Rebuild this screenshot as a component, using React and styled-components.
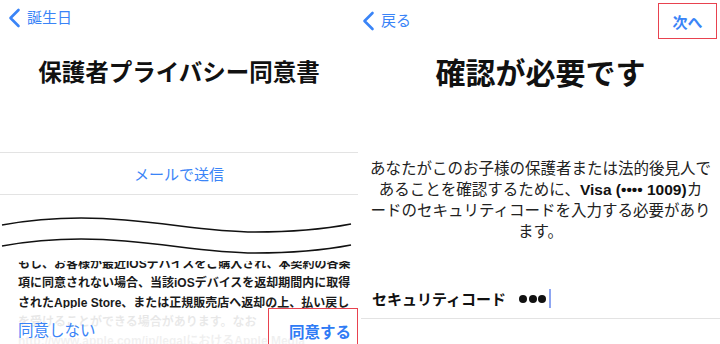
import React from "react";
import styled, { createGlobalStyle } from "styled-components";

const BLUE = "#3a84f7";
const RED = "#e8424f";
const LINE = "#e3e3e3";

const GlobalStyle = createGlobalStyle`
  html, body {
    margin: 0;
    padding: 0;
    background: #fff;
  }
  body {
    font-family: "Liberation Sans", "Noto Sans CJK JP", sans-serif;
    color: #111;
  }
  button {
    font-family: inherit;
  }
`;

const Screen = styled.div`
  display: flex;
  width: 720px;
  height: 344px;
  overflow: hidden;
  background: #fff;
`;

const Pane = styled.section`
  display: flex;
  flex-direction: column;
  width: ${(p) => p.$width}px;
  margin-left: ${(p) => p.$offset || 0}px;
  height: 100%;
`;

const NavBar = styled.div`
  display: flex;
  align-items: center;
  justify-content: space-between;
  height: ${(p) => p.$height}px;
  padding: 0 ${(p) => p.$right}px 0 ${(p) => p.$left}px;
  flex-shrink: 0;
`;

const BackButton = styled.button`
  display: flex;
  align-items: center;
  gap: 6px;
  padding: 0;
  border: none;
  background: none;
  color: ${BLUE};
  font-size: 15px;
  line-height: 20px;
`;

const NextButton = styled.button`
  display: flex;
  align-items: center;
  justify-content: center;
  width: 59px;
  height: 36px;
  padding: 0;
  background: none;
  border: 1.5px solid ${(p) => (p.$highlighted ? RED : "transparent")};
  color: ${BLUE};
  font-size: 15px;
  font-weight: 600;
`;

const Title = styled.h1`
  margin: ${(p) => p.$top}px 0 0;
  text-align: center;
  font-size: ${(p) => p.$size}px;
  line-height: ${(p) => p.$lh}px;
  font-weight: 700;
  color: #111;
  white-space: nowrap;
`;

const MailRow = styled.div`
  margin-top: 64px;
  height: 41px;
  display: flex;
  align-items: center;
  justify-content: center;
  border-top: 1px solid ${LINE};
  border-bottom: 1px solid ${LINE};
  color: ${BLUE};
  font-size: 15px;
  flex-shrink: 0;
`;

const DocArea = styled.div`
  position: relative;
  flex: 1;
  display: flex;
  flex-direction: column;
  overflow: hidden;
`;

const Waves = styled.svg`
  display: block;
  flex-shrink: 0;
`;

const TextClip = styled.div`
  flex: 1;
  overflow: hidden;
`;

const DocText = styled.div`
  margin-top: -6px;
  padding-left: 18px;
  font-size: 12px;
  line-height: 19.3px;
  font-weight: 700;
  color: #1a1a1a;
  white-space: nowrap;
`;

const Toolbar = styled.div`
  position: absolute;
  left: 0;
  right: 0;
  bottom: 0;
  height: 36px;
  display: flex;
  align-items: flex-end;
  justify-content: space-between;
  padding-left: 18px;
  background: linear-gradient(
    rgba(255, 255, 255, 0.88),
    rgba(255, 255, 255, 0.94)
  );
`;

const ToolbarButton = styled.button`
  display: flex;
  align-items: flex-end;
  padding: 0 0 ${(p) => (p.$highlighted ? 0 : 2)}px
    ${(p) => (p.$highlighted ? 20 : 0)}px;
  width: ${(p) => (p.$highlighted ? "90px" : "auto")};
  height: ${(p) => (p.$highlighted ? "37px" : "auto")};
  margin-bottom: ${(p) => (p.$highlighted ? -1 : 0)}px;
  background: none;
  border: ${(p) => (p.$highlighted ? `1.5px solid ${RED}` : "none")};
  color: ${(p) => (p.$highlighted ? "#2f7bf5" : BLUE)};
  font-size: 15.5px;
  line-height: 22px;
  font-weight: ${(p) => (p.$highlighted ? 600 : 400)};
`;

const Paragraph = styled.p`
  margin: 66px 0 0;
  text-align: center;
  font-size: 15.5px;
  line-height: 21px;
  color: #222;
  white-space: nowrap;

  strong {
    font-weight: 700;
    color: #111;
  }
`;

const FieldRow = styled.div`
  margin-top: auto;
  margin-bottom: 25px;
  height: 39px;
  display: flex;
  align-items: center;
  padding-left: 11px;
  border-bottom: 1px solid ${LINE};
`;

const FieldLabel = styled.span`
  font-size: 15px;
  font-weight: 700;
  color: #111;
  margin-right: 13px;
`;

const Dot = styled.span`
  width: 8px;
  height: 8px;
  border-radius: 50%;
  background: #111;
  margin-right: 1.5px;
`;

const Caret = styled.span`
  width: 2px;
  height: 19px;
  margin-left: 1px;
  background: #8ea6f2;
`;

const Chevron = () => (
  <svg width="13" height="20" viewBox="0 0 13 20">
    <path
      d="M10.5 2 L2.5 10 L10.5 18"
      fill="none"
      stroke="currentColor"
      strokeWidth="2.6"
      strokeLinecap="round"
      strokeLinejoin="round"
    />
  </svg>
);

const wave =
  "M2 30 C 35 24, 80 21, 125 25 C 175 29, 210 37, 255 37 C 300 37, 330 33, 351 29";

const docLines = [
  "もし、お客様が最近iOSデバイスをご購入され、本契約の各条",
  "項に同意されない場合、当該iOSデバイスを返却期間内に取得",
  "されたApple Store、または正規販売店へ返却の上、払い戻し",
  "を受けることができる場合があります。なお",
  "http://www.apple.com/jp/legalにおけるApple Media",
];

export default function App() {
  return (
    <>
      <GlobalStyle />
      <Screen>
        <Pane $width={358}>
          <NavBar $height={36} $left={8} $right={0}>
            <BackButton>
              <Chevron />
              誕生日
            </BackButton>
          </NavBar>
          <Title $top={22} $size={23.5} $lh={30}>
            保護者プライバシー同意書
          </Title>
          <MailRow>メールで送信</MailRow>
          <DocArea>
            <Waves width="358" height="66" viewBox="0 0 358 66">
              <path d={wave} fill="none" stroke="#111" strokeWidth="1.6" />
              <path
                d={wave}
                transform="translate(0 21)"
                fill="none"
                stroke="#111"
                strokeWidth="1.6"
              />
            </Waves>
            <TextClip>
              <DocText>
                {docLines.map((line) => (
                  <div key={line}>{line}</div>
                ))}
              </DocText>
            </TextClip>
            <Toolbar>
              <ToolbarButton>同意しない</ToolbarButton>
              <ToolbarButton $highlighted>同意する</ToolbarButton>
            </Toolbar>
          </DocArea>
        </Pane>

        <Pane $width={359} $offset={3}>
          <NavBar $height={42} $left={1} $right={3}>
            <BackButton>
              <Chevron />
              戻る
            </BackButton>
            <NextButton $highlighted>次へ</NextButton>
          </NavBar>
          <Title $top={14} $size={30} $lh={36}>
            確認が必要です
          </Title>
          <Paragraph>
            あなたがこのお子様の保護者または法的後見人で
            <br />
            あることを確認するために、<strong>Visa (•••• 1009)</strong>カ
            <br />
            ードのセキュリティコードを入力する必要があり
            <br />
            ます。
          </Paragraph>
          <FieldRow>
            <FieldLabel>セキュリティコード</FieldLabel>
            <Dot />
            <Dot />
            <Dot />
            <Caret />
          </FieldRow>
        </Pane>
      </Screen>
    </>
  );
}
